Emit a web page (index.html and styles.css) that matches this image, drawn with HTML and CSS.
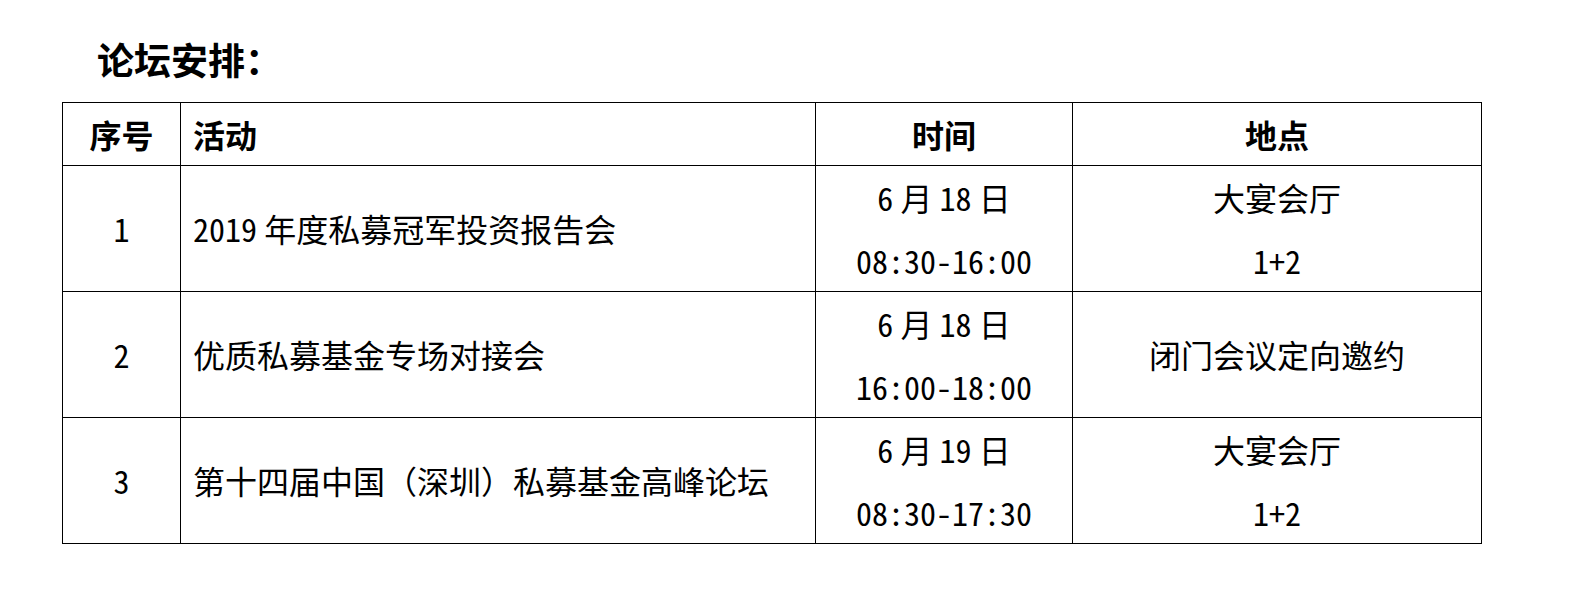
FILE: index.html
```html
<!DOCTYPE html>
<html lang="zh-CN">
<head>
<meta charset="utf-8">
<title>论坛安排</title>
<link rel="stylesheet" href="styles.css">
</head>
<body>
<div class="page">
  <h1 class="title">论坛安排：</h1>
  <table class="schedule">
    <colgroup>
      <col class="c-no">
      <col class="c-act">
      <col class="c-time">
      <col class="c-place">
    </colgroup>
    <thead>
      <tr>
        <th class="center">序号</th>
        <th class="left">活动</th>
        <th class="center">时间</th>
        <th class="center">地点</th>
      </tr>
    </thead>
    <tbody>
      <tr>
        <td class="center"><span class="n">1</span></td>
        <td class="left"><span class="n">2019</span> 年度私募冠军投资报告会</td>
        <td class="center"><span class="n">6</span> 月 <span class="n">18</span> 日<br><span class="n">08:30-16:00</span></td>
        <td class="center">大宴会厅<br><span class="n">1+2</span></td>
      </tr>
      <tr>
        <td class="center"><span class="n">2</span></td>
        <td class="left">优质私募基金专场对接会</td>
        <td class="center"><span class="n">6</span> 月 <span class="n">18</span> 日<br><span class="n">16:00-18:00</span></td>
        <td class="center">闭门会议定向邀约</td>
      </tr>
      <tr>
        <td class="center"><span class="n">3</span></td>
        <td class="left">第十四届中国（深圳）私募基金高峰论坛</td>
        <td class="center"><span class="n">6</span> 月 <span class="n">19</span> 日<br><span class="n">08:30-17:30</span></td>
        <td class="center">大宴会厅<br><span class="n">1+2</span></td>
      </tr>
    </tbody>
  </table>
</div>
</body>
</html>
```
FILE: styles.css
```css
html, body {
  margin: 0;
  padding: 0;
  background: #ffffff;
}

body {
  font-family: "Noto Sans CJK SC", "Noto Sans CJK JP", sans-serif;
  color: #000000;
}

.page {
  padding: 37px 0 0 62px;
}

.title {
  margin: 0 0 21px 35px;
  font-size: 37px;
  line-height: 44px;
  font-weight: 700;
}

.schedule {
  border-collapse: collapse;
  table-layout: fixed;
  width: 1419px;
  font-size: 32px;
}

.c-no { width: 118px; }
.c-act { width: 635px; }
.c-time { width: 257px; }
.c-place { width: 409px; }

.schedule th,
.schedule td {
  border: 1px solid #000000;
  padding: 0;
  vertical-align: middle;
}

.schedule th {
  font-weight: 700;
  line-height: 62px;
}

.schedule td {
  font-weight: 400;
  line-height: 62.5px;
  height: 125px;
}

.center { text-align: center; }
.left { text-align: left; padding-left: 12px !important; }

.n {
  font-family: "Noto Sans Mono CJK SC", "Noto Sans CJK SC", sans-serif;
}
```
